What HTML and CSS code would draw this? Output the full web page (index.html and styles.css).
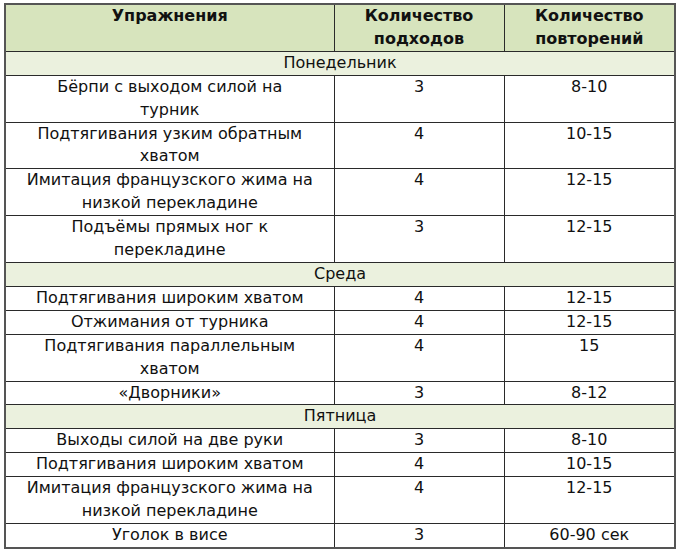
FILE: index.html
```html
<!DOCTYPE html>
<html lang="ru">
<head>
<meta charset="utf-8">
<link rel="stylesheet" href="styles.css">
</head>
<body>
<table class="plan">
  <colgroup>
    <col class="c1"><col class="c2"><col class="c3">
  </colgroup>
  <thead>
    <tr class="head">
      <th>Упражнения</th>
      <th>Количество подходов</th>
      <th>Количество повторений</th>
    </tr>
  </thead>
  <tbody>
    <tr class="day"><td colspan="3">Понедельник</td></tr>
    <tr><td>Бёрпи с выходом силой на турник</td><td>3</td><td>8-10</td></tr>
    <tr><td>Подтягивания узким обратным хватом</td><td>4</td><td>10-15</td></tr>
    <tr><td>Имитация французского жима на низкой перекладине</td><td>4</td><td>12-15</td></tr>
    <tr><td>Подъёмы прямых ног к перекладине</td><td>3</td><td>12-15</td></tr>
    <tr class="day"><td colspan="3">Среда</td></tr>
    <tr><td>Подтягивания широким хватом</td><td>4</td><td>12-15</td></tr>
    <tr><td>Отжимания от турника</td><td>4</td><td>12-15</td></tr>
    <tr><td>Подтягивания параллельным хватом</td><td>4</td><td>15</td></tr>
    <tr><td>«Дворники»</td><td>3</td><td>8-12</td></tr>
    <tr class="day"><td colspan="3">Пятница</td></tr>
    <tr><td>Выходы силой на две руки</td><td>3</td><td>8-10</td></tr>
    <tr><td>Подтягивания широким хватом</td><td>4</td><td>10-15</td></tr>
    <tr><td>Имитация французского жима на низкой перекладине</td><td>4</td><td>12-15</td></tr>
    <tr><td>Уголок в висе</td><td>3</td><td>60-90 сек</td></tr>
  </tbody>
</table>
</body>
</html>
```

FILE: styles.css
```css
html, body {
  margin: 0;
  padding: 0;
  background: #ffffff;
}
body {
  padding: 3px 0 0 4px;
  font-family: "DejaVu Sans", Verdana, sans-serif;
  font-size: 16px;
  color: #111111;
}
.plan {
  border-collapse: collapse;
  width: 670px;
  table-layout: fixed;
  border: 2px solid #555555;
}
.c1 { width: 329px; }
.c2 { width: 170px; }
.c3 { width: 171px; }
.plan th,
.plan td {
  border: 1px solid #2a2a2a;
  padding: 0 20px;
  line-height: 22.9px;
  text-align: center;
  vertical-align: top;
  font-weight: normal;
}
.plan th {
  font-weight: bold;
  background: #d7e4bd;
}
.day td {
  background: #ebf1de;
}
```
